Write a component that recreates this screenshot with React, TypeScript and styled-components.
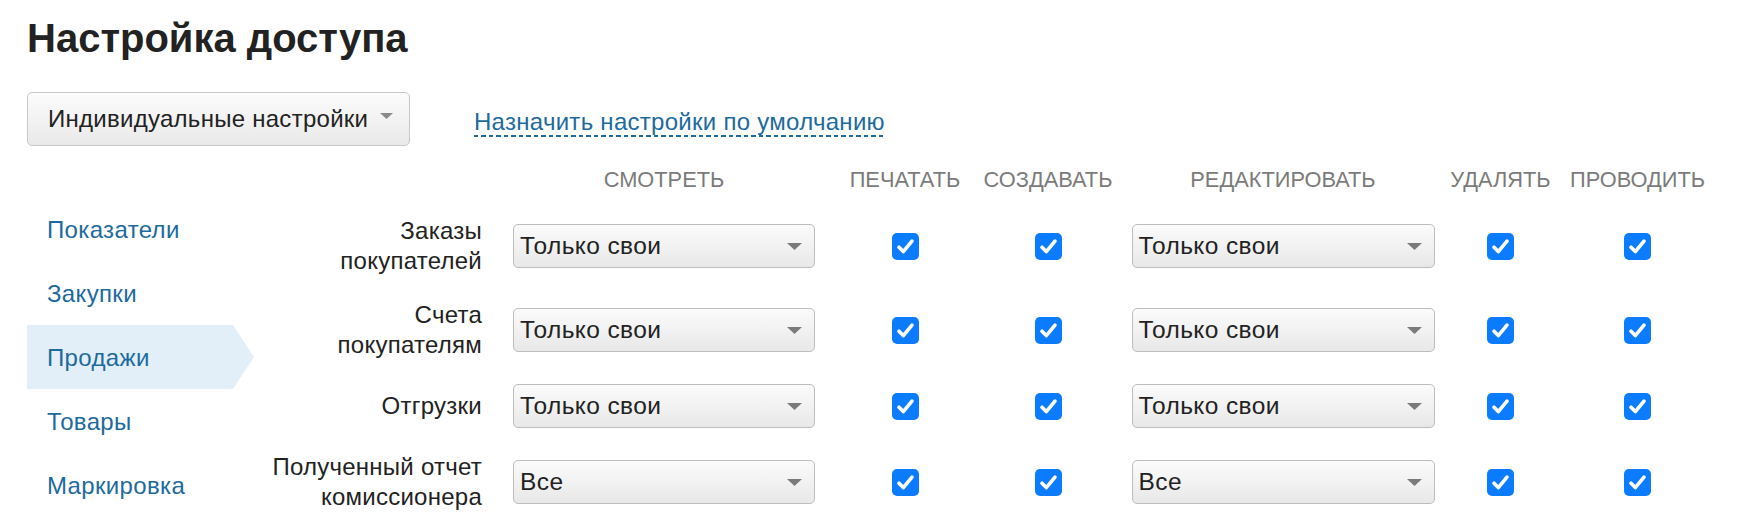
import React from "react";
import styled, { createGlobalStyle } from "styled-components";

const GlobalStyle = createGlobalStyle`
  html, body { margin: 0; padding: 0; background: #ffffff; }
  body { font-family: "Liberation Sans", Arial, Helvetica, sans-serif; color: #222; }
  * { box-sizing: border-box; }
`;

const Page = styled.div`
  padding: 15px 0 0 27px;
  width: 1738px;
  height: 530px;
  overflow: hidden;
`;

const Title = styled.h1`
  margin: 0;
  font-size: 40px;
  line-height: 46px;
  font-weight: 700;
  color: #222;
`;

const Toolbar = styled.div`
  display: flex;
  align-items: center;
  margin-top: 31px;
`;

const ModeButton = styled.button`
  display: flex;
  align-items: center;
  height: 54px;
  width: 383px;
  padding: 0 16px 0 20px;
  border: 1px solid #c8c8c8;
  border-radius: 5px;
  background: linear-gradient(#fcfcfc, #e9e9e9);
  font-family: inherit;
  font-size: 24px;
  letter-spacing: 0.27px;
  color: #222;
  cursor: pointer;
  gap: 12px;
`;

const ButtonText = styled.span`
  flex: 1;
  text-align: left;
  white-space: nowrap;
`;

const Caret = styled.svg<{ $up?: number }>`
  flex: none;
  margin-top: ${(p) => (p.$up ? -p.$up * 2 : 0)}px;
`;

const DashedLink = styled.a`
  margin-left: 64px;
  margin-top: 7px;
  font-size: 24px;
  letter-spacing: 0.28px;
  line-height: 28px;
  color: #1d6a9e;
  text-decoration: none;
  padding-bottom: 1px;
  background-image: repeating-linear-gradient(
    to right,
    #1d6a9e 0 4.5px,
    transparent 4.5px 7.5px
  );
  background-size: 100% 2px;
  background-repeat: no-repeat;
  background-position: left bottom;
  cursor: pointer;
`;

const Main = styled.div`
  display: flex;
  margin-top: 10px;
`;

const Nav = styled.nav`
  width: 235px;
  flex: none;
  margin-top: 41px;
  display: flex;
  flex-direction: column;
`;

const NavItem = styled.a<{ $active?: boolean }>`
  display: flex;
  align-items: center;
  height: 64px;
  width: 227px;
  padding-left: 20px;
  padding-top: 2px;
  font-size: 24px;
  letter-spacing: 0.35px;
  color: #1d6a9e;
  text-decoration: none;
  cursor: pointer;
  background: ${(p) => (p.$active ? "#e2eff9" : "transparent")};
  clip-path: polygon(0 0, 206px 0, 227px 50%, 206px 100%, 0 100%);
`;

const Grid = styled.div`
  display: grid;
  grid-template-columns: 233px 338px 144px 142px 328px 107px 167px;
  align-items: center;
`;

const HeadCell = styled.div`
  height: 48px;
  line-height: 48px;
  text-align: center;
  font-size: 21.8px;
  color: #7b7b7b;
  text-transform: uppercase;
  white-space: nowrap;
`;

const LabelCell = styled.div`
  padding: 12px 13px 12px 0;
  text-align: right;
  font-size: 24px;
  letter-spacing: 0.25px;
  line-height: 30px;
  color: #222;
`;

const Cell = styled.div`
  display: flex;
  justify-content: center;
  align-items: center;
  padding: 12px 0;
`;

const SelectBox = styled.div<{ $w: number }>`
  display: flex;
  align-items: center;
  width: ${(p) => p.$w}px;
  height: 44px;
  padding: 0 12px 0 6px;
  border: 1px solid #bdbdbd;
  border-radius: 5px;
  background: linear-gradient(#fbfbfb, #e8e8e8);
  font-size: 24.5px;
  letter-spacing: 0.4px;
  color: #222;
  cursor: pointer;
`;

const SelectText = styled.span`
  flex: 1;
  white-space: nowrap;
`;

const CheckBox = styled.span`
  display: inline-flex;
  align-items: center;
  justify-content: center;
  width: 27px;
  height: 27px;
  border-radius: 5px;
  background: #0b7bff;
`;

const Triangle = ({ w, h, color, up }: { w: number; h: number; color: string; up?: number }) => (
  <Caret $up={up} width={w} height={h} viewBox={`0 0 ${w} ${h}`}>
    <polygon points={`0,0 ${w},0 ${w / 2},${h}`} fill={color} />
  </Caret>
);

const Check = () => (
  <CheckBox>
    <svg width="27" height="27" viewBox="0 0 27 27">
      <path
        d="M7 14.2 L11.3 18.6 L20 8.2"
        fill="none"
        stroke="#ffffff"
        strokeWidth="3.6"
        strokeLinecap="round"
        strokeLinejoin="round"
      />
    </svg>
  </CheckBox>
);

const Select = ({ value, w }: { value: string; w: number }) => (
  <SelectBox $w={w}>
    <SelectText>{value}</SelectText>
    <Triangle w={15} h={7} color="#7a7a7a" />
  </SelectBox>
);

const headers = ["", "Смотреть", "Печатать", "Создавать", "Редактировать", "Удалять", "Проводить"];

const rows: { label: React.ReactNode; view: string; edit: string }[] = [
  { label: <>Заказы<br />покупателей</>, view: "Только свои", edit: "Только свои" },
  { label: <>Счета<br />покупателям</>, view: "Только свои", edit: "Только свои" },
  { label: "Отгрузки", view: "Только свои", edit: "Только свои" },
  { label: <>Полученный отчет<br />комиссионера</>, view: "Все", edit: "Все" },
];

const navItems = ["Показатели", "Закупки", "Продажи", "Товары", "Маркировка"];

export default function App() {
  return (
    <>
      <GlobalStyle />
      <Page>
        <Title>Настройка доступа</Title>
        <Toolbar>
          <ModeButton>
            <ButtonText>Индивидуальные настройки</ButtonText>
            <Triangle w={13} h={6} color="#8a8a8a" up={3} />
          </ModeButton>
          <DashedLink>Назначить настройки по умолчанию</DashedLink>
        </Toolbar>
        <Main>
          <Nav>
            {navItems.map((n) => (
              <NavItem key={n} $active={n === "Продажи"}>
                {n}
              </NavItem>
            ))}
          </Nav>
          <Grid>
            {headers.map((h, i) => (
              <HeadCell key={i}>{h}</HeadCell>
            ))}
            {rows.map((r, i) => (
              <React.Fragment key={i}>
                <LabelCell>{r.label}</LabelCell>
                <Cell>
                  <Select value={r.view} w={302} />
                </Cell>
                <Cell>
                  <Check />
                </Cell>
                <Cell>
                  <Check />
                </Cell>
                <Cell>
                  <Select value={r.edit} w={303} />
                </Cell>
                <Cell>
                  <Check />
                </Cell>
                <Cell>
                  <Check />
                </Cell>
              </React.Fragment>
            ))}
          </Grid>
        </Main>
      </Page>
    </>
  );
}
